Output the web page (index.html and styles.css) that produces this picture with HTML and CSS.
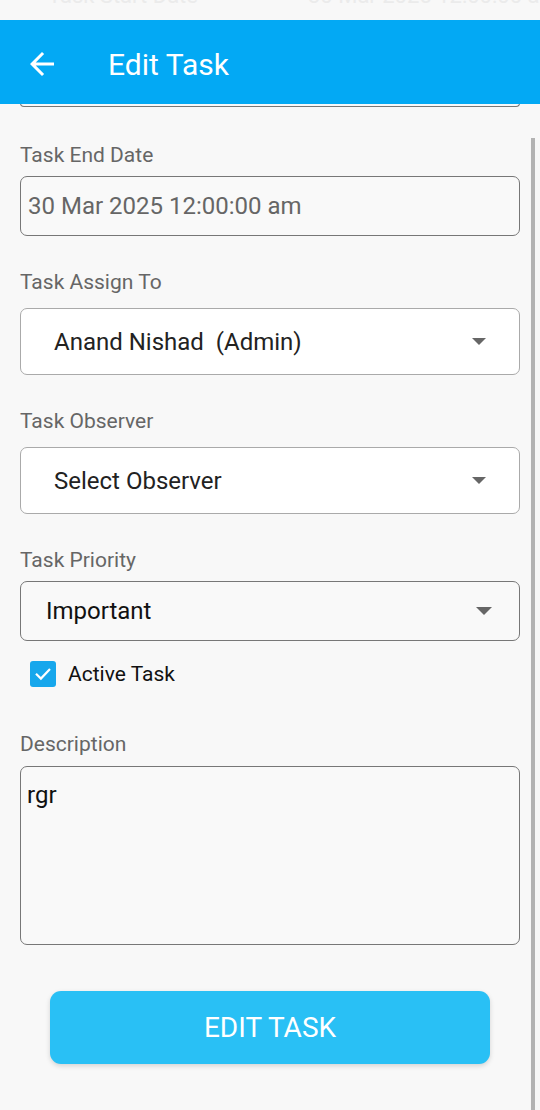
FILE: index.html
```html
<!DOCTYPE html>
<html>
<head>
<meta charset="utf-8">
<link rel="stylesheet" href="styles.css">
</head>
<body>
<div class="screen">
  <div class="ghost">
    <div class="ghost-row">
      <span class="ghost-a">Task Start Date</span>
      <span class="ghost-b">30 Mar 2025 12:00:00 am</span>
    </div>
  </div>
  <header class="appbar">
    <svg class="back" width="36" height="36" viewBox="0 0 24 24"><path d="M20 11H7.83l5.59-5.59L12 4l-8 8 8 8 1.41-1.41L7.83 13H20v-2z" fill="#fff"/></svg>
    <h1 class="title">Edit Task</h1>
  </header>
  <main class="content">
    <div class="prev-edge"></div>

    <div class="label first">Task End Date</div>
    <div class="field date">30 Mar 2025 12:00:00 am</div>

    <div class="label">Task Assign To</div>
    <div class="select">
      <span class="sel-text">Anand Nishad&nbsp; (Admin)</span>
      <span class="caret"></span>
    </div>

    <div class="label">Task Observer</div>
    <div class="select">
      <span class="sel-text">Select Observer</span>
      <span class="caret"></span>
    </div>

    <div class="label">Task Priority</div>
    <div class="field priority">
      <span class="prio-text">Important</span>
      <span class="caret big"></span>
    </div>

    <div class="check-row">
      <span class="checkbox">
        <svg width="20" height="20" viewBox="0 0 24 24"><path d="M4.5 12.5l5 5L19.5 7" fill="none" stroke="#fff" stroke-width="2.6" stroke-linecap="square"/></svg>
      </span>
      <span class="check-label">Active Task</span>
    </div>

    <div class="label desc-label">Description</div>
    <div class="field textarea">rgr</div>

    <div class="btn-wrap">
      <button class="btn">EDIT TASK</button>
    </div>
  </main>
  <div class="scrollbar"></div>
</div>
</body>
</html>
```

FILE: styles.css
```css
* { box-sizing: border-box; }
html, body {
  margin: 0;
  padding: 0;
  background: #f8f8f8;
  font-family: Roboto, "Noto Sans", sans-serif;
}
.screen {
  position: relative;
  width: 540px;
  height: 1110px;
  overflow: hidden;
  background: #f8f8f8;
}
.ghost {
  height: 20px;
  overflow: hidden;
}
.ghost-row {
  display: flex;
  white-space: nowrap;
  color: #ebebeb;
  font-size: 22px;
  line-height: 22px;
  margin-top: -15px;
}
.ghost-a { margin-left: 48px; }
.ghost-b { margin-left: 110px; }
.appbar {
  height: 84px;
  background: #03a9f4;
  display: flex;
  align-items: center;
  padding-top: 4px;
  position: relative;
  z-index: 2;
}
.back {
  margin-left: 24px;
}
.title {
  margin: 0 0 0 48px;
  color: #fff;
  font-size: 30px;
  font-weight: 400;
}
.content {
  padding: 0 20px 0 20px;
  width: 540px;
}
.prev-edge {
  height: 4px;
  border: 1.5px solid #777;
  border-top: none;
  border-radius: 0 0 6px 6px;
  margin-top: -1px;
}
.label {
  font-size: 21px;
  line-height: 24px;
  color: #666;
  margin-top: 34px;
}
.label.first { margin-top: 36px; }
.field {
  border: 1.5px solid #777;
  border-radius: 7px;
  background: #f9f9f9;
}
.date {
  margin-top: 9px;
  height: 60px;
  display: flex;
  align-items: center;
  padding-left: 7px;
  font-size: 24px;
  color: #666;
}
.select {
  margin-top: 14px;
  height: 67px;
  border: 1.5px solid #aaa;
  border-radius: 7px;
  background: #fff;
  display: flex;
  align-items: center;
  padding-left: 33px;
  padding-right: 33px;
  font-size: 24px;
  color: #222;
}
.sel-text { flex: 1; }
.caret {
  width: 0;
  height: 0;
  border-left: 7px solid transparent;
  border-right: 7px solid transparent;
  border-top: 7px solid #666;
}
.caret.big {
  border-left-width: 8px;
  border-right-width: 8px;
  border-top-width: 8px;
}
.priority {
  margin-top: 9px;
  height: 60px;
  display: flex;
  align-items: center;
  padding-left: 25px;
  padding-right: 27px;
  font-size: 24px;
  color: #111;
}
.prio-text { flex: 1; }
.check-row {
  margin-top: 20px;
  display: flex;
  align-items: center;
  padding-left: 10px;
  height: 26px;
}
.checkbox {
  width: 26px;
  height: 26px;
  border-radius: 3px;
  background: #17a7ec;
  display: flex;
  align-items: center;
  justify-content: center;
}
.check-label {
  margin-left: 12px;
  font-size: 21px;
  color: #111;
}
.desc-label { margin-top: 45px; }
.textarea {
  margin-top: 10px;
  height: 179px;
  padding: 14px 0 0 6px;
  font-size: 24px;
  line-height: 28px;
  color: #111;
}
.btn-wrap {
  margin-top: 46px;
  padding: 0 30px;
}
.btn {
  display: block;
  width: 100%;
  height: 73px;
  border: none;
  border-radius: 11px;
  background: #29c0f5;
  color: #fff;
  font-family: Roboto, "Noto Sans", sans-serif;
  font-size: 28px;
  box-shadow: 0 2px 5px rgba(0,0,0,0.15);
}
.scrollbar {
  position: absolute;
  left: 531px;
  top: 138px;
  width: 4px;
  bottom: 0;
  background: #b3b3b3;
}
```
